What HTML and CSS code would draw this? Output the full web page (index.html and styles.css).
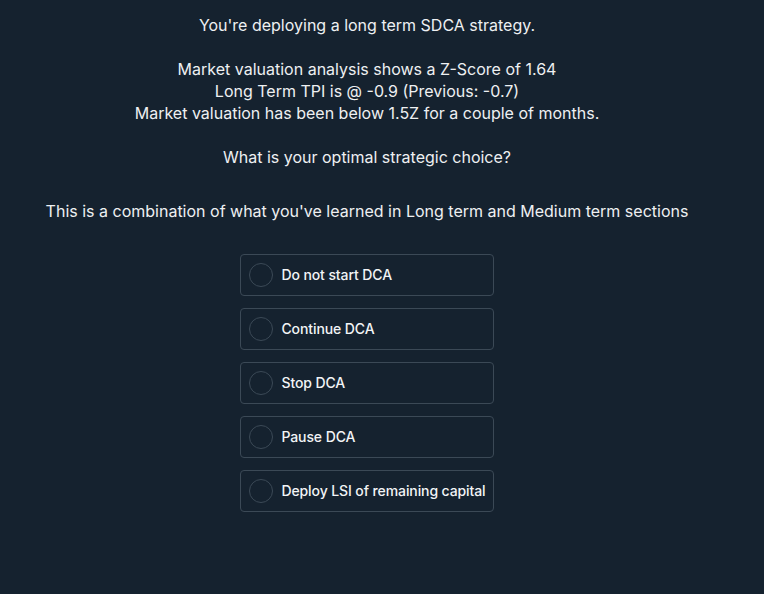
FILE: index.html
```html
<!DOCTYPE html>
<html>
<head>
<meta charset="utf-8">
<link rel="stylesheet" href="styles.css">
</head>
<body>
<div class="wrap">
  <div class="question">You're deploying a long term SDCA strategy.

Market valuation analysis shows a Z-Score of 1.64
Long Term TPI is @ -0.9 (Previous: -0.7)
Market valuation has been below 1.5Z for a couple of months.

What is your optimal strategic choice?</div>
  <div class="hint">This is a combination of what you've learned in Long term and Medium term sections</div>
  <div class="options">
    <label class="option"><span class="radio"></span><span class="label">Do not start DCA</span></label>
    <label class="option"><span class="radio"></span><span class="label">Continue DCA</span></label>
    <label class="option"><span class="radio"></span><span class="label">Stop DCA</span></label>
    <label class="option"><span class="radio"></span><span class="label">Pause DCA</span></label>
    <label class="option"><span class="radio"></span><span class="label">Deploy LSI of remaining capital</span></label>
  </div>
</div>
</body>
</html>
```

FILE: styles.css
```css
html, body {
  margin: 0;
  padding: 0;
  background: #15222f;
}
body {
  width: 764px;
  height: 594px;
  overflow: hidden;
  font-family: Inter, "Noto Sans", sans-serif;
  color: #eef0f2;
}
.wrap {
  width: 734px;
  display: flex;
  flex-direction: column;
  align-items: center;
  padding-top: 14px;
}
.question {
  white-space: pre-line;
  text-align: center;
  font-size: 16px;
  line-height: 22px;
}
.hint {
  margin-top: 32px;
  font-size: 16px;
  line-height: 22px;
  text-align: center;
}
.options {
  margin-top: 32px;
  display: flex;
  flex-direction: column;
  gap: 12px;
}
.option {
  display: flex;
  align-items: center;
  gap: 8px;
  height: 42px;
  box-sizing: border-box;
  padding: 0 7px 0 8px;
  border: 1px solid #3b4956;
  border-radius: 4px;
  font-size: 14px;
  font-weight: 500;
  letter-spacing: -0.1px;
  color: #f2f4f6;
}
.label {
  padding-bottom: 2px;
}
.radio {
  width: 24px;
  height: 24px;
  box-sizing: border-box;
  border: 1px solid #3b4956;
  border-radius: 50%;
  flex: none;
}
```
